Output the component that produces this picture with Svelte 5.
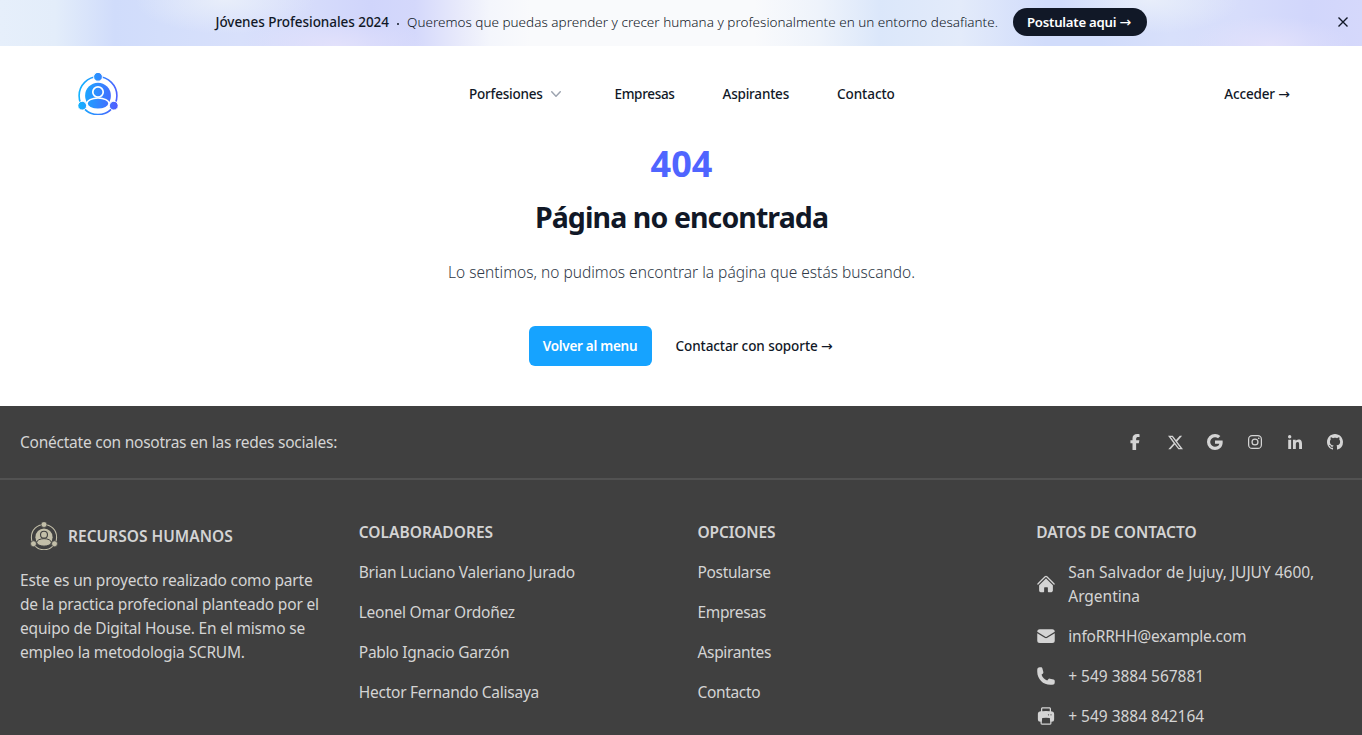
<script>
  const people = [
    'Brian Luciano Valeriano Jurado',
    'Leonel Omar Ordoñez',
    'Pablo Ignacio Garzón',
    'Hector Fernando Calisaya'
  ];
  const options = ['Postularse', 'Empresas', 'Aspirantes', 'Contacto'];

  const social = [
    { name: 'Facebook', box: '0 0 320 512', w: 10, h: 16, d: 'M80 299.3V512H196V299.3h86.5l18-97.8H196V166.9c0-51.7 20.3-71.5 72.7-71.5 16.3 0 29.4.4 37 1.2V7.9C291.4 4 256.4 0 236.2 0 129.3 0 80 50.5 80 141.4v60.1H14v97.8z' },
    { name: 'X', box: '0 0 16 16', w: 15, h: 15, d: 'M12.6.75h2.454l-5.36 6.142L16 15.25h-4.937l-3.867-5.07-4.425 5.07H.316l5.733-6.57L0 .75h5.063l3.495 4.633L12.601.75Zm-.86 13.028h1.36L4.323 2.145H2.865z' },
    { name: 'Google', box: '0 0 16 16', w: 16, h: 16, d: 'M15.545 6.558a9.4 9.4 0 0 1 .139 1.626c0 2.434-.87 4.492-2.384 5.885h.002C11.978 15.292 10.158 16 8 16A8 8 0 1 1 8 0a7.7 7.7 0 0 1 5.352 2.082l-2.284 2.284A4.35 4.35 0 0 0 8 3.166c-2.087 0-3.86 1.408-4.492 3.304a4.8 4.8 0 0 0 0 3.063h.003c.635 1.893 2.405 3.301 4.492 3.301 1.078 0 2.004-.276 2.722-.764h-.003a3.7 3.7 0 0 0 1.599-2.431H8v-3.08z' },
    { name: 'Instagram', box: '0 0 448 448', w: 14, h: 14, d: 'M224.1 109a115 115 0 1 0 0 230 115 115 0 0 0 0-230zm0 189.700a74.700 74.700 0 1 1 0-149.400 74.700 74.700 0 0 1 0 149.400zM370.500 104.300a26.800 26.800 0 1 1-53.600 0 26.800 26.800 0 0 1 53.600 0zM132 0h184a132 132 0 0 1 132 132v184a132 132 0 0 1-132 132H132A132 132 0 0 1 0 316V132A132 132 0 0 1 132 0zm0 40a92 92 0 0 0-92 92v184a92 92 0 0 0 92 92h184a92 92 0 0 0 92-92V132a92 92 0 0 0-92-92z' },
    { name: 'LinkedIn', box: '0 0 448 448', w: 14, h: 14, d: 'M100.280 448H7.400V148.900h92.880zM53.790 108.100C24.090 108.100 0 83.500 0 53.800a53.790 53.790 0 0 1 107.580 0c0 29.700-24.100 54.300-53.790 54.300zM447.900 448h-92.680V302.400c0-34.700-.7-79.200-48.290-79.200-48.290 0-55.690 37.700-55.690 76.700V448h-92.780V148.900h89.080v40.800h1.300c12.400-23.500 42.690-48.300 87.880-48.300 94 0 111.280 61.900 111.280 142.300V448z' },
    { name: 'GitHub', box: '0 0 16 16', w: 16, h: 16, d: 'M8 0C3.580 0 0 3.580 0 8c0 3.540 2.290 6.530 5.470 7.590.4.070.55-.17.55-.38 0-.19-.01-.82-.01-1.490-2.010.37-2.530-.49-2.690-.94-.09-.23-.48-.94-.82-1.130-.28-.15-.68-.52-.01-.53.63-.01 1.080.58 1.230.82.72 1.210 1.870.87 2.330.66.070-.52.28-.87.51-1.070-1.780-.2-3.640-.89-3.640-3.950 0-.87.31-1.590.82-2.150-.08-.2-.36-1.020.08-2.120 0 0 .67-.21 2.200.82.64-.18 1.320-.27 2-.27s1.360.09 2 .27c1.530-1.040 2.200-.82 2.200-.82.44 1.100.16 1.920.08 2.120.51.56.82 1.270.82 2.150 0 3.070-1.870 3.750-3.650 3.950.29.25.54.73.54 1.480 0 1.070-.01 1.930-.01 2.200 0 .21.15.46.55.38A8.010 8.010 0 0 0 16 8c0-4.420-3.580-8-8-8z' }
  ];

  const contact = [
    { text: 'San Salvador de Jujuy, JUJUY 4600, Argentina', kind: 'address', d: 'M11.470 3.840a.75.75 0 0 1 1.060 0l8.690 8.690a.75.75 0 1 0 1.060-1.060l-8.689-8.690a2.250 2.250 0 0 0-3.182 0l-8.690 8.690a.75.75 0 0 0 1.061 1.060l8.690-8.690z M12 5.432l8.159 8.159c.03.03.06.058.091.086v6.198c0 1.035-.84 1.875-1.875 1.875H15a.75.75 0 0 1-.75-.75v-4.500a.75.75 0 0 0-.75-.75h-3a.75.75 0 0 0-.75.75V21a.75.75 0 0 1-.75.75H5.625a1.875 1.875 0 0 1-1.875-1.875v-6.198a2.290 2.290 0 0 0 .091-.086L12 5.430z' },
    { text: 'infoRRHH@example.com', kind: 'mail', d: 'M1.500 8.670v8.580a3 3 0 0 0 3 3h15a3 3 0 0 0 3-3V8.670l-8.928 5.493a3 3 0 0 1-3.144 0L1.500 8.670z M22.500 6.908V6.750a3 3 0 0 0-3-3h-15a3 3 0 0 0-3 3v.158l9.714 5.978a1.500 1.500 0 0 0 1.572 0L22.500 6.908z' },
    { text: '+ 549 3884 567881', kind: 'phone', d: 'M1.500 4.500a3 3 0 0 1 3-3h1.372c.86 0 1.610.586 1.819 1.420l1.105 4.423a1.875 1.875 0 0 1-.694 1.955l-1.293.97c-.135.101-.164.249-.126.352a11.285 11.285 0 0 0 6.697 6.697c.103.038.25.009.352-.126l.97-1.293a1.875 1.875 0 0 1 1.955-.694l4.423 1.105c.834.209 1.420.959 1.420 1.820V19.500a3 3 0 0 1-3 3h-2.250C8.552 22.500 1.500 15.448 1.500 6.750V4.500z' },
    { text: '+ 549 3884 842164', kind: 'printer', d: 'M7.875 1.500C6.839 1.500 6 2.340 6 3.375v2.990c-.426.053-.851.110-1.274.174-1.454.218-2.476 1.483-2.476 2.917v6.294a3 3 0 0 0 3 3h.27l-.155 1.705A1.875 1.875 0 0 0 7.232 22.500h9.536a1.875 1.875 0 0 0 1.867-2.045l-.155-1.705h.27a3 3 0 0 0 3-3V9.456c0-1.434-1.022-2.700-2.476-2.917A48.716 48.716 0 0 0 18 6.366V3.375c0-1.036-.84-1.875-1.875-1.875h-8.250zM16.500 6.205v-2.830A.375.375 0 0 0 16.125 3h-8.250a.375.375 0 0 0-.375.375v2.830a49.353 49.353 0 0 1 9 0zm-.217 8.265c.178.018.317.160.333.337l.526 5.784a.375.375 0 0 1-.374.409H7.232a.375.375 0 0 1-.374-.409l.526-5.784a.373.373 0 0 1 .333-.337 41.741 41.741 0 0 1 8.566 0zm.967-3.970a.75.75 0 0 1 .75-.75h.008a.75.75 0 0 1 .75.75v.008a.75.75 0 0 1-.75.75H18a.75.75 0 0 1-.75-.75V10.500zM15 9.750a.75.75 0 0 0-.75.75v.008c0 .414.336.75.75.75h.008a.75.75 0 0 0 .75-.75V10.500a.75.75 0 0 0-.75-.75H15z' }
  ];
</script>

{#snippet logo(w, h, fill, gap)}
  <svg class="logo" width={w} height={h} viewBox="10 9 40 42" aria-hidden="true">
    <defs>
      <linearGradient id="brand" gradientUnits="userSpaceOnUse" x1="10" y1="30" x2="50" y2="34">
        <stop offset="0" stop-color="#11b5ff" />
        <stop offset="1" stop-color="#4f5dff" />
      </linearGradient>
    </defs>
    <circle cx="30" cy="31.700" r="18.900" fill="none" stroke={fill} stroke-width="1.600" />
    <g {fill} stroke={gap} stroke-width="1">
      <circle cx="30" cy="12.800" r="4.400" />
      <circle cx="14.200" cy="41.700" r="4.400" />
      <circle cx="45.800" cy="41.700" r="4.400" />
    </g>
    <circle cx="30" cy="31.700" r="12.900" {fill} />
    <ellipse cx="30" cy="39.600" rx="11" ry="5.600" {fill} stroke={gap} stroke-width="1.500" />
    <circle cx="30" cy="28" r="5.200" {fill} stroke={gap} stroke-width="1.700" />
  </svg>
{/snippet}

<div class="page">
  <div class="banner">
    <p class="message"><strong>Jóvenes Profesionales 2024</strong><i></i><span>Queremos que puedas aprender y crecer humana y profesionalmente en un entorno desafiante.</span></p>
    <a class="pill" href="#postulate">Postulate aqui <span class="arrow">→</span></a>
    <button class="close" aria-label="Cerrar">
      <svg width="10" height="10" viewBox="0 0 10 10"><path d="M.5.5l9 9M9.500.5l-9 9" /></svg>
    </button>
  </div>

  <header>
    <a href="#inicio" aria-label="Inicio">{@render logo(40, 42, 'url(#brand)', '#fff')}</a>
    <nav>
      <a class="drop" href="#porfesiones">Porfesiones
        <svg width="20" height="20" viewBox="0 0 20 20"><path d="M5.230 7.210a.75.75 0 0 1 1.060.02L10 11.168l3.710-3.938a.75.75 0 1 1 1.080 1.040l-4.250 4.500a.75.75 0 0 1-1.080 0l-4.250-4.500a.75.75 0 0 1 .02-1.060z" /></svg>
      </a>
      <a class="empresas" href="#empresas">Empresas</a>
      <a class="aspirantes" href="#aspirantes">Aspirantes</a>
      <a class="contacto" href="#contacto">Contacto</a>
    </nav>
    <a class="login" href="#acceder">Acceder <span class="arrow">→</span></a>
  </header>

  <main>
    <p class="code">404</p>
    <h1>Página no encontrada</h1>
    <p class="lead">Lo sentimos, no pudimos encontrar la página que estás buscando.</p>
    <div class="actions">
      <a class="primary" href="#menu">Volver al menu</a>
      <a class="support" href="#soporte">Contactar con soporte <span class="arrow">→</span></a>
    </div>
  </main>

  <footer>
    <div class="social">
      <span>Conéctate con nosotras en las redes sociales:</span>
      <div class="links">
        {#each social as s}
          <a href="#{s.name}" aria-label={s.name}><svg width={s.w} height={s.h} viewBox={s.box}><path fill-rule="evenodd" d={s.d} /></svg></a>
        {/each}
      </div>
    </div>
    <div class="columns">
      <section>
        <h6 class="brand">{@render logo(28, 28, '#c3bfa9', '#404040')}RECURSOS HUMANOS</h6>
        <p class="about">Este es un proyecto realizado como parte de la practica profecional planteado por el equipo de Digital House. En el mismo se empleo la metodologia SCRUM.</p>
      </section>
      <section>
        <h6>COLABORADORES</h6>
        {#each people as p}<p>{p}</p>{/each}
      </section>
      <section class="options">
        <h6>OPCIONES</h6>
        {#each options as o}<p>{o}</p>{/each}
      </section>
      <section>
        <h6>DATOS DE CONTACTO</h6>
        {#each contact as c}
          <p class="contact {c.kind}">
            <svg width="20" height="20" viewBox="0 0 24 24"><path fill-rule="evenodd" d={c.d} /></svg>
            <span>{c.text}</span>
          </p>
        {/each}
      </section>
    </div>
  </footer>
</div>

<style>
  :global(body) { margin: 0; background: #fff; }
  .page {
    height: 735px;
    overflow: hidden;
    font-family: 'Noto Sans', 'Open Sans', sans-serif;
    color: #111827;
    font-size: 13.5px;
    line-height: 24px;
  }
  a { color: inherit; text-decoration: none; }
  p, h1, h6 { margin: 0; }
  svg { display: block; flex: none; }
  .arrow { font-family: 'DejaVu Sans', sans-serif; font-weight: 400; letter-spacing: 0; font-size: 14px; line-height: 1; }

  .banner {
    height: 46px;
    display: grid;
    grid-template-columns: 215.500px auto auto 1fr;
    align-items: center;
    background:
      radial-gradient(ellipse 90px 34px at 225px 0, #e8eefa, #e8eefa00),
      radial-gradient(ellipse 90px 34px at 1150px 0, #e8eefa, #e8eefa00),
      radial-gradient(ellipse 90px 30px at 335px 46px, #e2e1fb, #e2e1fb00),
      radial-gradient(ellipse 80px 30px at 1270px 46px, #e2e1fb, #e2e1fb00),
      linear-gradient(90deg, #e6effb 0, #e3edfa 55px, #d0dcfb 115px, #d3defb 160px, #d8e0fb 240px, #d6dcfb 310px, #d0d5fb 370px, #d4d8fb 415px, #e6e8fb 455px, #f4f6fc 490px, #f9fafc 530px, #f9fafc 755px, #eef3fb 820px, #dbe7fa 880px, #e3ebfa 960px, #d1dcfb 1045px, #d1dcfb 1100px, #d8e0fb 1170px, #d7ddfb 1240px, #d1d6fb 1310px, #d5d8fb 1362px);
  }
  .message { grid-column: 2; display: flex; align-items: center; white-space: nowrap; height: 24px; margin-top: -2px; }
  .message strong { font-weight: 500; letter-spacing: -0.04px; width: 173.500px; }
  .message i { width: 2px; height: 2px; border-radius: 50%; background: #111827; margin: 3px 8px 0; }
  .message span { font-weight: 300; letter-spacing: 0.01px; width: 591px; }
  .pill {
    margin: -2px 0 0 14.500px;
    width: 134px;
    height: 28px;
    line-height: 28px;
    box-sizing: border-box;
    padding-left: 14.500px;
    border-radius: 14px;
    background: #111827;
    color: #fff;
    font-weight: 600;
    font-size: 13.200px;
    letter-spacing: -0.24px;
    white-space: nowrap;
  }
  .close { justify-self: end; margin: -2px 14px 0 0; border: 0; padding: 0; background: none; }
  .close path { stroke: #111827; stroke-width: 1.400; fill: none; }

  header {
    height: 96px;
    box-sizing: border-box;
    display: grid;
    grid-template-columns: 391px 1fr auto;
    padding: 0 72px 0 78px;
    align-items: center;
    font-weight: 500;
  }
  nav { display: flex; gap: 48px; }
  nav a { white-space: nowrap; }
  .drop { width: 97.500px; display: flex; align-items: center; justify-content: space-between; letter-spacing: -0.21px; }
  .drop svg { fill: #9ca3af; margin-right: .5px; }
  .empresas { width: 60px; letter-spacing: -0.34px; }
  .aspirantes { width: 66.500px; letter-spacing: -0.2px; }
  .contacto { width: 58px; letter-spacing: -0.06px; }
  .login { letter-spacing: -0.15px; }

  main { height: 264px; box-sizing: border-box; padding-top: 2px; text-align: center; }
  .code { font-size: 36px; line-height: 40px; font-weight: 700; color: #4f65ff; padding-left: 1px; }
  h1 { margin-top: 13px; font-size: 28.500px; line-height: 40px; font-weight: 700; letter-spacing: -0.91px; padding-left: 1px; }
  .lead { margin-top: 21px; font-size: 15.500px; line-height: 28px; font-weight: 300; color: #2f3947; padding-left: 1px; }
  .actions { margin-top: 40px; display: flex; justify-content: center; align-items: center; gap: 24px; }
  .primary { width: 123px; height: 40px; line-height: 40px; border-radius: 6px; background: #16a3ff; color: #fff; font-weight: 600; letter-spacing: -0.27px; }
  .support { width: 158px; text-align: left; white-space: nowrap; font-weight: 500; letter-spacing: -0.08px; }

  footer { background: #404040; color: #d4d4d4; font-size: 15.500px; height: 329px; }
  .social { height: 74px; box-sizing: border-box; border-bottom: 2px solid #525252; padding: 0 19px 0 20px; display: flex; align-items: center; justify-content: space-between; letter-spacing: -0.24px; }
  .links { display: flex; gap: 24px; }
  .links a { width: 16px; height: 16px; display: grid; place-items: center; }
  footer svg { fill: currentColor; }
  .columns { display: grid; grid-template-columns: repeat(4, 1fr); gap: 32px; padding: 40px 19px 0 20px; }
  section { display: flex; flex-direction: column; gap: 16px; letter-spacing: -0.25px; }
  h6 { font-size: 15.500px; line-height: 24px; font-weight: 600; letter-spacing: 0.02px; }
  .brand { display: flex; align-items: center; height: 32px; padding-left: 10px; gap: 10px; }
  .about { letter-spacing: -0.18px; }
  .options { letter-spacing: -0.34px; }
  .options h6 { letter-spacing: -0.14px; }
  .contact { display: flex; align-items: center; gap: 12px; }
  .address, .phone, .printer { letter-spacing: -0.02px; }
  .mail { letter-spacing: -0.2px; }
</style>
